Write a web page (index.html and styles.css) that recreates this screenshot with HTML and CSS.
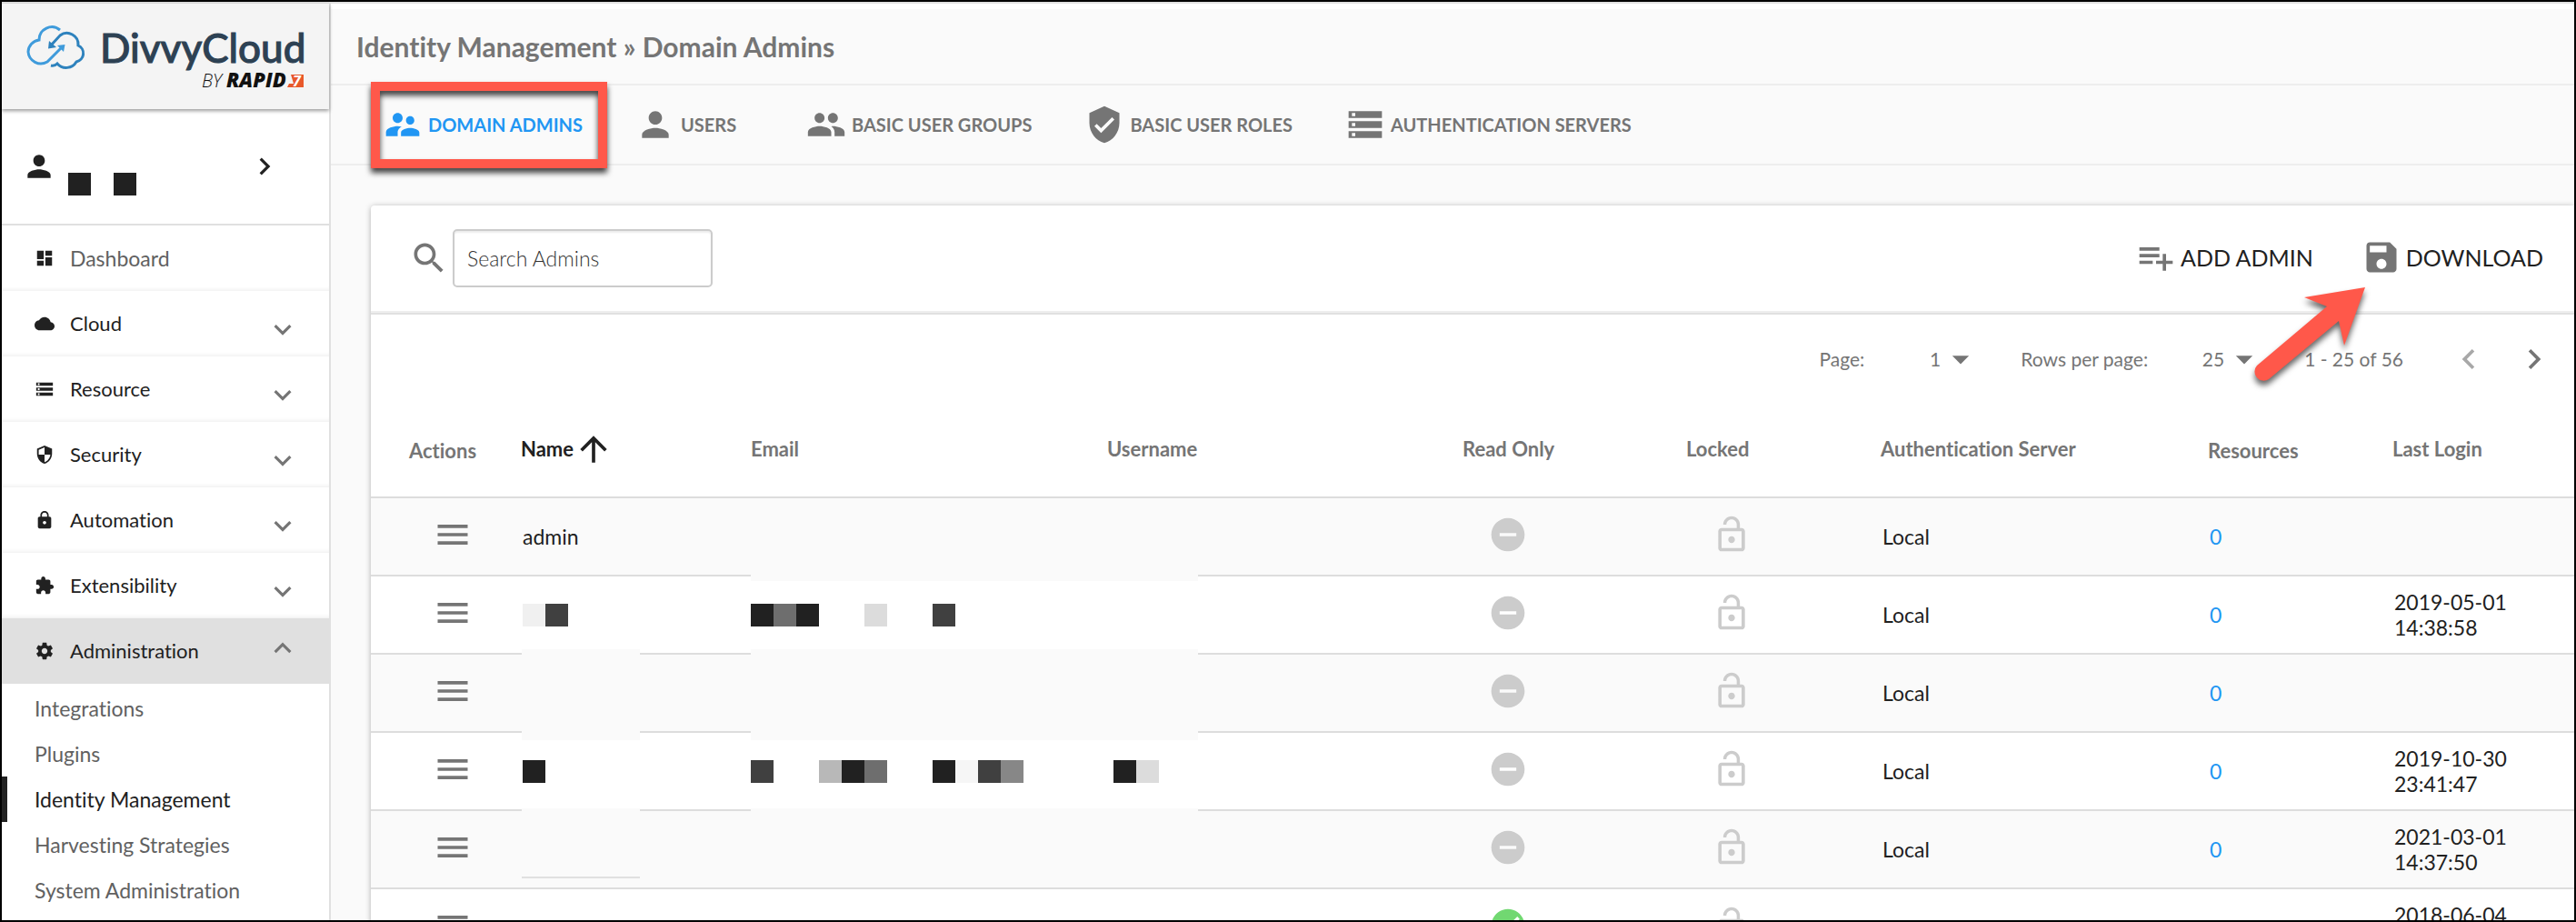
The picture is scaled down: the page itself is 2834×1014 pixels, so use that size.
FILE: index.html
```html
<!DOCTYPE html>
<html lang="en">
<head>
    <meta charset="UTF-8">
    <meta name="viewport" content="width=device-width, initial-scale=1.0">
    <title>Identity Management</title>
    <link rel="stylesheet" href="styles.css">
</head>
<body>
    <!-- Icon set -->
    <svg class="sprite" aria-hidden="true">
        <symbol id="person" viewBox="0 0 24 24"><path d="M12 12c2.21 0 4-1.79 4-4s-1.79-4-4-4-4 1.79-4 4 1.79 4 4 4zm0 2c-2.67 0-8 1.34-8 4v2h16v-2c0-2.66-5.33-4-8-4z"/></symbol>
        <symbol id="chevron-right" viewBox="0 0 24 24"><path d="M10 6L8.590 7.410 13.170 12l-4.580 4.590L10 18l6-6z"/></symbol>
        <symbol id="chevron-left" viewBox="0 0 24 24"><path d="M15.410 7.410L14 6l-6 6 6 6 1.410-1.410L10.830 12z"/></symbol>
        <symbol id="expand-more" viewBox="0 0 24 24"><path d="M16.590 12.590L12 17.170 7.410 12.590 6 14l6 6 6-6z"/></symbol>
        <symbol id="expand-less" viewBox="0 0 24 24"><path d="M12 6l-6 6 1.410 1.410L12 8.830l4.590 4.580L18 12z"/></symbol>
        <symbol id="dashboard" viewBox="0 0 24 24"><path d="M3 13h8V3H3v10zm0 8h8v-6H3v6zm10 0h8V11h-8v10zm0-18v6h8V3h-8z"/></symbol>
        <symbol id="cloud" viewBox="0 0 24 24"><path d="M19.350 10.040C18.670 6.590 15.640 4 12 4 9.110 4 6.600 5.640 5.350 8.040 2.340 8.360 0 10.910 0 14c0 3.310 2.690 6 6 6h13c2.760 0 5-2.240 5-5 0-2.640-2.050-4.780-4.650-4.960z"/></symbol>
        <symbol id="storage" viewBox="0 0 24 24"><path d="M2 20h20v-4H2v4zm2-3h2v2H4v-2zM2 4v4h20V4H2zm4 3H4V5h2v2zm-4 7h20v-4H2v4zm2-3h2v2H4v-2z"/></symbol>
        <symbol id="security" viewBox="0 0 24 24"><path d="M12 1L3 5v6c0 5.550 3.840 10.740 9 12 5.160-1.260 9-6.450 9-12V5l-9-4zm0 10.990h7c-.53 4.120-3.280 7.790-7 8.940V12H5V6.300l7-3.110v8.800z"/></symbol>
        <symbol id="lock" viewBox="0 0 24 24"><path d="M18 8h-1V6c0-2.760-2.240-5-5-5S7 3.240 7 6v2H6c-1.100 0-2 .9-2 2v10c0 1.100.9 2 2 2h12c1.100 0 2-.9 2-2V10c0-1.100-.9-2-2-2zm-6 9c-1.100 0-2-.9-2-2s.9-2 2-2 2 .9 2 2-.9 2-2 2zm3.100-9H8.900V6c0-1.710 1.390-3.100 3.100-3.100 1.710 0 3.100 1.390 3.100 3.100v2z"/></symbol>
        <symbol id="extension" viewBox="0 0 24 24"><path d="M20.500 11H19V7c0-1.100-.9-2-2-2h-4V3.500C13 2.120 11.880 1 10.500 1S8 2.120 8 3.500V5H4c-1.100 0-1.990.9-1.990 2v3.800H3.500c1.490 0 2.700 1.210 2.700 2.700s-1.210 2.700-2.700 2.700H2V20c0 1.100.9 2 2 2h3.800v-1.500c0-1.490 1.210-2.700 2.700-2.700 1.490 0 2.700 1.210 2.700 2.700V22H17c1.100 0 2-.9 2-2v-4h1.500c1.380 0 2.500-1.120 2.500-2.500S21.880 11 20.500 11z"/></symbol>
        <symbol id="settings" viewBox="0 0 24 24"><path d="M19.430 12.980c.04-.32.07-.64.07-.98s-.03-.66-.07-.98l2.110-1.650c.19-.15.24-.42.12-.64l-2-3.460c-.12-.22-.39-.3-.61-.22l-2.490 1c-.52-.4-1.080-.73-1.690-.98l-.38-2.650C14.460 2.180 14.250 2 14 2h-4c-.25 0-.46.18-.49.42l-.38 2.650c-.61.25-1.170.59-1.690.98l-2.490-1c-.23-.09-.49 0-.61.22l-2 3.460c-.13.22-.07.49.12.64l2.110 1.650c-.04.32-.07.65-.07.98s.03.66.07.98l-2.110 1.650c-.19.15-.24.42-.12.64l2 3.460c.12.22.39.3.61.22l2.490-1c.52.4 1.080.73 1.690.98l.38 2.650c.03.24.24.42.49.42h4c.25 0 .46-.18.49-.42l.38-2.650c.61-.25 1.170-.59 1.690-.98l2.490 1c.23.09.49 0 .61-.22l2-3.460c.12-.22.07-.49-.12-.64l-2.110-1.650zM12 15.500c-1.930 0-3.500-1.570-3.500-3.500s1.570-3.500 3.500-3.500 3.500 1.570 3.500 3.500-1.570 3.500-3.500 3.500z"/></symbol>
        <symbol id="supervisor" viewBox="0 0 24 24"><path d="M16.500 12c1.380 0 2.490-1.120 2.490-2.500S17.880 7 16.500 7C15.120 7 14 8.120 14 9.500s1.120 2.500 2.500 2.500zM9 11c1.660 0 2.990-1.340 2.990-3S10.660 5 9 5C7.340 5 6 6.340 6 8s1.340 3 3 3zm7.500 3c-1.830 0-5.500.92-5.500 2.750V19h11v-2.250c0-1.830-3.670-2.750-5.500-2.750zM9 13c-2.330 0-7 1.170-7 3.500V19h7v-2.250c0-.85.33-2.340 2.370-3.470C10.500 13.100 9.660 13 9 13z"/></symbol>
        <symbol id="group" viewBox="0 0 24 24"><path d="M16 11c1.660 0 2.990-1.340 2.990-3S17.660 5 16 5c-1.660 0-3 1.340-3 3s1.340 3 3 3zm-8 0c1.660 0 2.990-1.340 2.990-3S9.660 5 8 5C6.340 5 5 6.340 5 8s1.340 3 3 3zm0 2c-2.330 0-7 1.170-7 3.500V19h14v-2.500c0-2.330-4.670-3.500-7-3.500zm8 0c-.29 0-.62.02-.97.05 1.160.84 1.970 1.970 1.970 3.450V19h6v-2.500c0-2.330-4.670-3.500-7-3.500z"/></symbol>
        <symbol id="verified" viewBox="0 0 24 24"><path d="M12 1L3 5v6c0 5.550 3.840 10.740 9 12 5.160-1.260 9-6.450 9-12V5l-9-4zm-2 16l-4-4 1.410-1.410L10 14.170l6.590-6.590L18 9l-8 8z"/></symbol>
        <symbol id="search-icon" viewBox="0 0 24 24"><path d="M15.500 14h-.79l-.28-.27C15.410 12.590 16 11.110 16 9.500 16 5.910 13.090 3 9.500 3S3 5.910 3 9.500 5.910 16 9.500 16c1.610 0 3.090-.59 4.230-1.570l.27.28v.79l5 4.990L20.490 19l-4.990-5zm-6 0C7.010 14 5 11.990 5 9.500S7.010 5 9.500 5 14 7.010 14 9.500 11.990 14 9.500 14z"/></symbol>
        <symbol id="playlist-add" viewBox="0 0 24 24"><path d="M14 10H2v2h12v-2zm0-4H2v2h12V6zm4 8v-4h-2v4h-4v2h4v4h2v-4h4v-2h-4zM2 16h8v-2H2v2z"/></symbol>
        <symbol id="save" viewBox="0 0 24 24"><path d="M17 3H5c-1.110 0-2 .9-2 2v14c0 1.100.89 2 2 2h14c1.100 0 2-.9 2-2V7l-4-4zm-5 16c-1.660 0-3-1.340-3-3s1.340-3 3-3 3 1.340 3 3-1.340 3-3 3zm3-10H5V5h10v4z"/></symbol>
        <symbol id="drop-down" viewBox="0 0 24 24"><path d="M7 10l5 5 5-5z"/></symbol>
        <symbol id="arrow-up" viewBox="0 0 24 24"><path d="M4 12l1.410 1.410L11 7.830V20h2V7.830l5.580 5.590L20 12l-8-8-8 8z"/></symbol>
        <symbol id="menu" viewBox="0 0 24 24"><path d="M3 18h18v-2H3v2zm0-5h18v-2H3v2zm0-7v2h18V6H3z"/></symbol>
        <symbol id="remove-circle" viewBox="0 0 24 24"><path d="M12 2C6.480 2 2 6.480 2 12s4.480 10 10 10 10-4.480 10-10S17.520 2 12 2zm5 11H7v-2h10v2z"/></symbol>
        <symbol id="check-circle" viewBox="0 0 24 24"><path d="M12 2C6.480 2 2 6.480 2 12s4.480 10 10 10 10-4.480 10-10S17.520 2 12 2zm-2 15l-5-5 1.410-1.410L10 14.170l7.590-7.590L19 8l-9 9z"/></symbol>
        <symbol id="lock-open" viewBox="0 0 24 24"><path d="M12 17c1.100 0 2-.9 2-2s-.9-2-2-2-2 .9-2 2 .9 2 2 2zm6-9h-1V6c0-2.760-2.240-5-5-5S7 3.240 7 6h1.900c0-1.710 1.390-3.100 3.100-3.100 1.710 0 3.100 1.390 3.100 3.100v2H6c-1.100 0-2 .9-2 2v10c0 1.100.9 2 2 2h12c1.100 0 2-.9 2-2V10c0-1.100-.9-2-2-2zm0 12H6V10h12v10z"/></symbol>
    </svg>

    <div class="app">
        <aside class="sidebar">
            <div class="brand">
                <svg class="logo" viewBox="0 0 340 100" role="img" aria-label="DivvyCloud by Rapid7">
                    <g class="logo-cloud">
                        <path class="cloud-left" d="M50 17A14 14 0 0 0 27 28A13.500 13.500 0 0 0 15 41A14 14 0 0 0 36 52L52 36"/>
                        <path class="cloud-right" d="M39 35L50 23A12.500 12.500 0 0 1 70 34A9.500 9.500 0 0 1 68 52A13 13 0 0 1 47 54Q44 57 40 56"/>
                    </g>
                    <path class="head-left" d="M38 29L37 37.500L46 36z"/>
                    <path class="head-right" d="M47 34L55.500 33L54 41z"/>
                    <text class="logo-name" x="94" y="53">DivvyCloud</text>
                    <text class="logo-by" x="206" y="80">BY <tspan class="logo-rapid">RAPID</tspan></text>
                    <path class="logo-badge" d="M304 66h14v14h-18l2-4h5z"/>
                    <text class="logo-seven" x="306" y="79">7</text>
                </svg>
            </div>
            <div class="account">
                <svg class="icon icon-account"><use href="#person"/></svg>
                <span class="account-name"><i class="px c1"></i><i class="px"></i><i class="px c1"></i></span>
                <button class="account-open" aria-label="Open account"><svg class="icon icon-account"><use href="#chevron-right"/></svg></button>
            </div>
            <nav class="menu">
                <a class="menu-item menu-link" href="#"><svg class="icon icon-menu"><use href="#dashboard"/></svg>Dashboard</a>
                <button class="menu-item"><svg class="icon icon-menu"><use href="#cloud"/></svg>Cloud<svg class="icon icon-expand"><use href="#expand-more"/></svg></button>
                <button class="menu-item"><svg class="icon icon-menu"><use href="#storage"/></svg>Resource<svg class="icon icon-expand"><use href="#expand-more"/></svg></button>
                <button class="menu-item"><svg class="icon icon-menu"><use href="#security"/></svg>Security<svg class="icon icon-expand"><use href="#expand-more"/></svg></button>
                <button class="menu-item"><svg class="icon icon-menu"><use href="#lock"/></svg>Automation<svg class="icon icon-expand"><use href="#expand-more"/></svg></button>
                <button class="menu-item"><svg class="icon icon-menu"><use href="#extension"/></svg>Extensibility<svg class="icon icon-expand"><use href="#expand-more"/></svg></button>
                <button class="menu-item open"><svg class="icon icon-menu"><use href="#settings"/></svg>Administration<svg class="icon icon-expand"><use href="#expand-less"/></svg></button>
                <ul class="submenu">
                    <li><a href="#">Integrations</a></li>
                    <li><a href="#">Plugins</a></li>
                    <li><a class="current" href="#">Identity Management</a></li>
                    <li><a href="#">Harvesting Strategies</a></li>
                    <li><a href="#">System Administration</a></li>
                </ul>
            </nav>
        </aside>

        <main class="main">
            <h1 class="page-title">Identity Management » Domain Admins</h1>
            <nav class="tabs">
                <a class="tab active" href="#"><svg class="icon"><use href="#supervisor"/></svg>DOMAIN ADMINS<span class="highlight"></span></a>
                <a class="tab" href="#"><svg class="icon"><use href="#person"/></svg>USERS</a>
                <a class="tab" href="#"><svg class="icon"><use href="#group"/></svg>BASIC USER GROUPS</a>
                <a class="tab" href="#"><svg class="icon"><use href="#verified"/></svg>BASIC USER ROLES</a>
                <a class="tab" href="#"><svg class="icon"><use href="#storage"/></svg>AUTHENTICATION SERVERS</a>
            </nav>

            <section class="panel">
                <div class="toolbar">
                    <label class="search-label" for="search" aria-label="Search Admins"><svg class="icon"><use href="#search-icon"/></svg></label>
                    <input class="search" type="text" id="search" placeholder="Search Admins">
                    <div class="toolbar-actions">
                        <button class="action"><svg class="icon"><use href="#playlist-add"/></svg>ADD ADMIN</button>
                        <button class="action"><svg class="icon"><use href="#save"/></svg>DOWNLOAD</button>
                    </div>
                </div>

                <div class="pagination">
                    <div class="page-group">
                        <label for="page">Page:</label>
                        <select id="page"><option>1</option><option>2</option><option>3</option></select>
                        <svg class="icon"><use href="#drop-down"/></svg>
                    </div>
                    <div class="page-group">
                        <label for="rows">Rows per page:</label>
                        <select id="rows"><option>25</option><option>50</option></select>
                        <svg class="icon"><use href="#drop-down"/></svg>
                    </div>
                    <span>1 - 25 of 56</span>
                    <div class="page-buttons">
                        <button aria-label="Previous page" disabled><svg class="icon"><use href="#chevron-left"/></svg></button>
                        <button aria-label="Next page"><svg class="icon"><use href="#chevron-right"/></svg></button>
                    </div>
                </div>

                <table class="admins">
                    <colgroup>
                        <col class="col-actions">
                        <col class="col-name">
                        <col class="col-email">
                        <col class="col-username">
                        <col class="col-readonly">
                        <col class="col-locked">
                        <col class="col-server">
                        <col class="col-resources">
                        <col class="col-login">
                    </colgroup>
                    <thead>
                        <tr>
                            <th class="actions-head">Actions</th>
                            <th><button class="sort sorted">Name<svg class="icon"><use href="#arrow-up"/></svg></button></th>
                            <th><button class="sort">Email</button></th>
                            <th><button class="sort">Username</button></th>
                            <th><button class="sort">Read Only</button></th>
                            <th><button class="sort">Locked</button></th>
                            <th><button class="sort">Authentication Server</button></th>
                            <th>Resources</th>
                            <th><button class="sort">Last Login</button></th>
                        </tr>
                    </thead>
                    <tbody>
                        <tr>
                            <td class="actions"><button aria-label="Row actions"><svg class="icon"><use href="#menu"/></svg></button></td>
                            <td>admin</td>
                            <td class="email"></td>
                            <td class="username"></td>
                            <td class="state"><svg class="icon"><use href="#remove-circle"/></svg></td>
                            <td class="state"><svg class="icon"><use href="#lock-open"/></svg></td>
                            <td>Local</td>
                            <td><a href="#">0</a></td>
                            <td></td>
                        </tr>
                        <tr>
                            <td class="actions"><button aria-label="Row actions"><svg class="icon"><use href="#menu"/></svg></button></td>
                            <td><span class="mosaic"><i class="px c7"></i><i class="px c2"></i></span></td>
                            <td class="email"><span class="patch patch-wide patch-top"></span><span class="mosaic"><i class="px c1"></i><i class="px c3"></i><i class="px c1"></i><i class="px"></i><i class="px"></i><i class="px c6"></i><i class="px"></i><i class="px"></i><i class="px c2"></i></span></td>
                            <td class="username"></td>
                            <td class="state"><svg class="icon"><use href="#remove-circle"/></svg></td>
                            <td class="state"><svg class="icon"><use href="#lock-open"/></svg></td>
                            <td>Local</td>
                            <td><a href="#">0</a></td>
                            <td>2019-05-01<br>14:38:58</td>
                        </tr>
                        <tr>
                            <td class="actions"><button aria-label="Row actions"><svg class="icon"><use href="#menu"/></svg></button></td>
                            <td><span class="patch patch-full"></span></td>
                            <td class="email"><span class="patch patch-wide patch-full"></span></td>
                            <td class="username"></td>
                            <td class="state"><svg class="icon"><use href="#remove-circle"/></svg></td>
                            <td class="state"><svg class="icon"><use href="#lock-open"/></svg></td>
                            <td>Local</td>
                            <td><a href="#">0</a></td>
                            <td></td>
                        </tr>
                        <tr>
                            <td class="actions"><button aria-label="Row actions"><svg class="icon"><use href="#menu"/></svg></button></td>
                            <td><span class="mosaic"><i class="px c1"></i></span></td>
                            <td class="email"><span class="mosaic"><i class="px c2"></i><i class="px"></i><i class="px"></i><i class="px c5"></i><i class="px c1"></i><i class="px c3"></i><i class="px"></i><i class="px"></i><i class="px c1"></i><i class="px c8"></i><i class="px c2"></i><i class="px c4"></i></span></td>
                            <td class="username"><span class="mosaic"><i class="px c1"></i><i class="px c6"></i></span></td>
                            <td class="state"><svg class="icon"><use href="#remove-circle"/></svg></td>
                            <td class="state"><svg class="icon"><use href="#lock-open"/></svg></td>
                            <td>Local</td>
                            <td><a href="#">0</a></td>
                            <td>2019-10-30<br>23:41:47</td>
                        </tr>
                        <tr>
                            <td class="actions"><button aria-label="Row actions"><svg class="icon"><use href="#menu"/></svg></button></td>
                            <td><span class="patch patch-line"></span></td>
                            <td class="email"><span class="patch patch-wide patch-top"></span></td>
                            <td class="username"></td>
                            <td class="state"><svg class="icon"><use href="#remove-circle"/></svg></td>
                            <td class="state"><svg class="icon"><use href="#lock-open"/></svg></td>
                            <td>Local</td>
                            <td><a href="#">0</a></td>
                            <td>2021-03-01<br>14:37:50</td>
                        </tr>
                        <tr>
                            <td class="actions"><button aria-label="Row actions"><svg class="icon"><use href="#menu"/></svg></button></td>
                            <td></td>
                            <td class="email"></td>
                            <td class="username"></td>
                            <td class="state ok"><svg class="icon"><use href="#check-circle"/></svg></td>
                            <td class="state"><svg class="icon"><use href="#lock-open"/></svg></td>
                            <td></td>
                            <td></td>
                            <td>2018-06-04<br>&nbsp;</td>
                        </tr>
                    </tbody>
                </table>

                <!-- Callout arrow pointing at the download button -->
                <svg class="callout" viewBox="0 0 140 130" aria-hidden="true"><path d="M128 6L61 17L86 27L9 92A10 10 0 0 0 22 107L99 43L105 70z"/></svg>
            </section>
        </main>
    </div>
</body>
</html>
```
FILE: styles.css
```css
* {
    box-sizing: border-box;
}

body {
    margin: 0;
    height: 100vh;
    overflow: hidden;
    border: 2px solid #000;
    background: #fafafa;
    color: #212121;
    font-family: Lato, "Open Sans", sans-serif;
    font-size: 23px;
    line-height: 28px;
    font-variant-ligatures: none;
}

button {
    display: block;
    margin: 0;
    padding: 0;
    border: 0;
    background: none;
    color: inherit;
    font: inherit;
    cursor: pointer;
}

a {
    color: #2196f3;
    text-decoration: none;
}

.sprite {
    position: absolute;
    width: 0;
    height: 0;
}

.icon {
    display: block;
    flex: none;
    width: 44px;
    height: 44px;
    fill: #757575;
}

.app {
    display: flex;
    height: 100%;
    border-top: 2px solid #e0e0e0;
}

/* Sidebar */
.sidebar {
    flex: none;
    width: 362px;
    background: #fff;
    border-right: 2px solid #e0e0e0;
}

.brand {
    position: relative;
    height: 116px;
    padding: 12px 6px 0 14px;
    background: #f4f4f4;
    box-shadow: 0 2px 4px rgba(0, 0, 0, 0.4);
}

.logo {
    display: block;
    width: 340px;
    height: 100px;
}

.logo-cloud {
    fill: none;
    stroke-width: 3;
}

.cloud-left {
    stroke: #3f9bdb;
}

.cloud-right {
    stroke: #2e82bd;
}

.head-left {
    fill: #2e82bd;
}

.head-right {
    fill: #3f9bdb;
}

.logo-name {
    fill: #2d4153;
    stroke: #2d4153;
    stroke-width: 1;
    font-size: 44px;
    font-weight: 500;
}

.logo-by {
    fill: #111;
    font-family: "Open Sans", sans-serif;
    font-size: 20px;
    font-style: italic;
    font-weight: 300;
}

.logo-rapid {
    font-size: 22px;
    font-weight: 800;
}

.logo-badge {
    fill: #e8582a;
}

.logo-seven {
    fill: #fff;
    font-family: "Open Sans", sans-serif;
    font-size: 16px;
    font-style: italic;
    font-weight: 700;
}

.account {
    display: flex;
    align-items: center;
    height: 128px;
    padding: 0 52px 0 22px;
    border-bottom: 2px solid #e0e0e0;
}

.icon-account {
    width: 38px;
    height: 38px;
    fill: #212121;
}

.account-name {
    display: flex;
    margin-left: 13px;
    padding-top: 38px;
}

.account-open {
    margin-left: auto;
}

.menu-item {
    display: flex;
    align-items: center;
    gap: 17px;
    width: 100%;
    height: 72px;
    padding: 0 32px 0 36px;
    color: #212121;
    font-size: 22px;
    box-shadow: inset 0 -5px 5px -4px rgba(0, 0, 0, 0.08);
}

.menu-link {
    color: #616161;
    font-size: 23px;
}

.menu-item.open {
    background: #e0e0e0;
    box-shadow: none;
}

.icon-menu {
    width: 22px;
    height: 22px;
    fill: #212121;
}

.icon-expand {
    width: 38px;
    height: 38px;
    margin-left: auto;
}

.submenu {
    margin: 0;
    padding: 2px 0 0;
    list-style: none;
}

.submenu a {
    display: block;
    padding: 11px 30px;
    border-left: 6px solid transparent;
    color: #616161;
}

.submenu .current {
    border-color: #212121;
    color: #212121;
}

/* Page header */
.main {
    flex: 1;
    min-width: 0;
    border-top: 6px solid #fff;
}

.page-title {
    margin: 0;
    padding: 0 28px;
    border-bottom: 2px solid #eee;
    color: #757575;
    font-size: 30px;
    font-weight: 700;
    line-height: 82px;
}

.tabs {
    display: flex;
    gap: 58px;
    height: 88px;
    padding-left: 57px;
    border-bottom: 2px solid #eee;
}

.tab {
    position: relative;
    display: flex;
    align-items: center;
    gap: 6px;
    min-width: 130px;
    color: #757575;
    font-size: 20px;
    font-weight: 700;
}

.tab.active {
    color: #2196f3;
}

.tab.active .icon {
    fill: #2196f3;
}

.highlight {
    position: absolute;
    inset: -4px -27px -5px -13px;
    border: 10px solid #ff584a;
    filter: drop-shadow(0 5px 3px rgba(0, 0, 0, 0.75));
}

/* Panel */
.panel {
    position: relative;
    margin: 44px 0 0 44px;
    background: #fff;
    border-radius: 4px 0 0 0;
    box-shadow: 0 1px 6px rgba(0, 0, 0, 0.3);
}

.toolbar {
    display: flex;
    align-items: center;
    height: 118px;
    padding: 0 34px 0 42px;
    border-bottom: 2px solid #eee;
    box-shadow: 0 2px 0 #e0e0e0;
}

.search {
    width: 286px;
    height: 64px;
    margin-left: 4px;
    padding: 0 14px;
    border: 2px solid #ccc;
    border-radius: 5px;
    box-shadow: inset 0 2px 2px rgba(0, 0, 0, 0.08);
    background: #fff;
    color: #212121;
    font: inherit;
    font-weight: 300;
}

.search::placeholder {
    color: #333;
}

.toolbar-actions {
    display: flex;
    gap: 53px;
    margin-left: auto;
    padding-bottom: 3px;
}

.action {
    display: flex;
    align-items: center;
    gap: 5px;
    font-size: 25px;
}

.pagination {
    display: flex;
    align-items: center;
    justify-content: flex-end;
    gap: 44px;
    height: 102px;
    padding-right: 22px;
    color: #757575;
    font-size: 21px;
}

.page-group {
    display: flex;
    align-items: center;
}

.page-group select {
    width: 84px;
    padding: 0;
    border: 0;
    appearance: none;
    background: none;
    color: inherit;
    font: inherit;
    text-align-last: right;
}

.page-buttons {
    display: flex;
    gap: 28px;
    margin-left: 6px;
}

.page-buttons button:disabled .icon {
    fill: #a8a8a8;
}

/* Admin table */
.admins {
    width: 100%;
    table-layout: fixed;
    border-collapse: separate;
    border-spacing: 0;
}

.col-actions { width: 165px; }
.col-name { width: 253px; }
.col-email { width: 392px; }
.col-username { width: 391px; }
.col-readonly { width: 246px; }
.col-locked { width: 214px; }
.col-server { width: 360px; }
.col-resources { width: 203px; }
.col-login { width: 200px; }

.admins th {
    height: 102px;
    padding: 0;
    border-bottom: 2px solid #ddd;
    color: #757575;
    font-size: 22px;
    font-weight: 700;
    text-align: left;
}

.admins .actions-head {
    padding-left: 42px;
}

.sort {
    display: flex;
    align-items: center;
    height: 44px;
    padding-bottom: 4px;
}

.sorted {
    color: #212121;
}

.sorted .icon {
    fill: #212121;
}

.admins td {
    position: relative;
    height: 86px;
    padding: 0 0 0 2px;
    border-bottom: 2px solid #ddd;
}

.admins tbody tr:nth-child(odd) {
    background: #fafafa;
}

.admins .email {
    padding-left: 0;
}

.admins .username {
    padding-left: 7px;
}

.admins .actions {
    padding: 0 0 4px 68px;
}

.admins .state {
    padding: 0 0 4px 28px;
}

.state .icon {
    fill: #ccc;
}

.state.ok .icon {
    fill: #71d871;
}

/* Redacted text */
.mosaic {
    display: flex;
}

.px {
    width: 25px;
    height: 25px;
}

.c1 { background: #212121; }
.c2 { background: #404040; }
.c3 { background: #6e6e6e; }
.c4 { background: #878787; }
.c5 { background: #b8b8b8; }
.c6 { background: #dcdcdc; }
.c7 { background: #f0f0f0; }
.c8 { background: #f6f6f6; }

.patch {
    position: absolute;
    z-index: 1;
    left: 1px;
    width: 130px;
    background: #fafafa;
}

.patch-wide {
    left: 0;
    width: 492px;
}

.patch-top {
    top: -3px;
    height: 8px;
}

.patch-full {
    top: -6px;
    height: 100px;
}

.patch-line {
    top: -3px;
    height: 77px;
    border-bottom: 2px solid #e0e0e0;
}

.callout {
    position: absolute;
    z-index: 2;
    top: 84px;
    right: 218px;
    width: 140px;
    height: 130px;
    fill: #ff584a;
    filter: drop-shadow(0 5px 3px rgba(0, 0, 0, 0.6));
    pointer-events: none;
}
```
